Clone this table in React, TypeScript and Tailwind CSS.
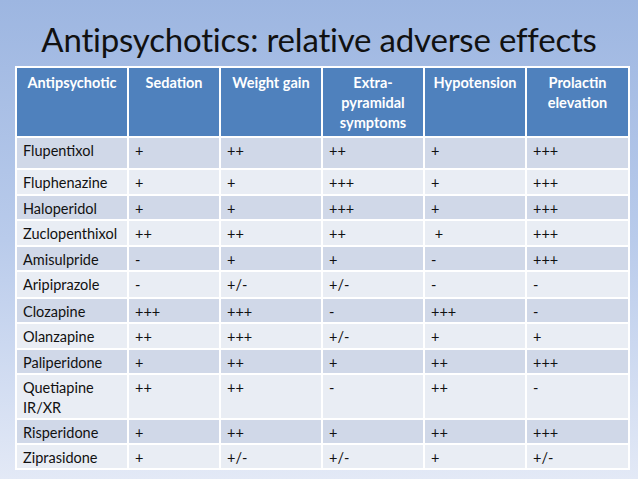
import React from 'react';

type Row = { name: string; vals: string[]; h: string };

const rows: Row[] = [
  { name: 'Flupentixol', vals: ['+', '++', '++', '+', '+++'], h: 'h-[32px]' },
  { name: 'Fluphenazine', vals: ['+', '+', '+++', '+', '+++'], h: 'h-[26px]' },
  { name: 'Haloperidol', vals: ['+', '+', '+++', '+', '+++'], h: 'h-[24px]' },
  { name: 'Zuclopenthixol', vals: ['++', '++', '++', '\u00a0+', '+++'], h: 'h-[26px]' },
  { name: 'Amisulpride', vals: ['-', '+', '+', '-', '+++'], h: 'h-[24px]' },
  { name: 'Aripiprazole', vals: ['-', '+/-', '+/-', '-', '-'], h: 'h-[27px]' },
  { name: 'Clozapine', vals: ['+++', '+++', '-', '+++', '-'], h: 'h-[24px]' },
  { name: 'Olanzapine', vals: ['++', '+++', '+/-', '+', '+'], h: 'h-[26px]' },
  { name: 'Paliperidone', vals: ['+', '++', '+', '++', '+++'], h: 'h-[24px]' },
  { name: 'Quetiapine IR/XR', vals: ['++', '++', '-', '++', '-'], h: 'h-[45px]' },
  { name: 'Risperidone', vals: ['+', '++', '+', '++', '+++'], h: 'h-[25px]' },
  { name: 'Ziprasidone', vals: ['+', '+/-', '+/-', '+', '+/-'], h: 'h-[25px]' },
];

const headers = ['Antipsychotic', 'Sedation', 'Weight gain', 'Extra-pyramidal symptoms', 'Hypotension', 'Prolactin elevation'];

function App() {
  return (
    <div className="w-[638px] h-[479px] overflow-hidden bg-gradient-to-b from-[#9db6e1] via-[#b9cbeb] to-[#e3e9f6] font-['Lato','Open_Sans',sans-serif]">
      <h1 className="pt-[19px] h-[66px] text-center text-[33px] leading-[40px] text-[#111] tracking-[-0.2px]">
        Antipsychotics: relative adverse effects
      </h1>
      <table className="ml-[15px] w-[613px] table-fixed border-collapse text-[14.5px] leading-5">
        <colgroup>
          <col className="w-[112px]" />
          <col className="w-[92px]" />
          <col className="w-[102px]" />
          <col className="w-[102px]" />
          <col className="w-[102px]" />
          <col className="w-[103px]" />
        </colgroup>
        <thead>
          <tr className="h-[70px] bg-[#4f81bd]">
            {headers.map((h) => (
              <th key={h} className="border-2 border-white align-top pt-[5px] px-2 font-bold text-white text-center">
                {h === 'Extra-pyramidal symptoms' ? (
                  <>Extra-<br />pyramidal<br />symptoms</>
                ) : (
                  h
                )}
              </th>
            ))}
          </tr>
        </thead>
        <tbody>
          {rows.map((r, i) => (
            <tr key={r.name} className={`${r.h} ${i % 2 === 0 ? 'bg-[#d0d8e8]' : 'bg-[#e9edf4]'}`}>
              <td className="border-2 border-white align-top pt-[3px] px-[6px] text-[#111] whitespace-normal">{r.name}</td>
              {r.vals.map((v, j) => (
                <td key={j} className="border-2 border-white align-top pt-[3px] px-[6px] text-[#111]">{v}</td>
              ))}
            </tr>
          ))}
        </tbody>
      </table>
    </div>
  );
}

export default App;
